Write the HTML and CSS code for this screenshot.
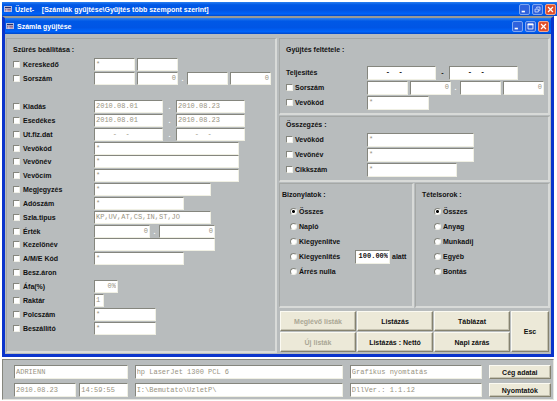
FILE: index.html
```html
<!DOCTYPE html>
<html lang="hu">
<head>
<meta charset="utf-8">
<title>Üzlet</title>
<link rel="stylesheet" href="styles.css">
</head>
<body>
<div class="app">
  <header class="titlebar app-title">
    <svg class="app-icon" viewBox="0 0 10 8"><rect width="10" height="8" fill="#e4e0f0"/><rect x="1" y="1" width="8" height="2" fill="#26306e"/><path d="M1 4.5h2M4 4.5h5M1 6.5h2M4 6.5h5" stroke="#6a3060"/></svg>
    <h1>Üzlet- &nbsp;&nbsp; [Számlák gyűjtése\Gyűjtés több szempont szerint]</h1>
    <div class="window-buttons">
      <button type="button" class="win" aria-label="Kis méret"><svg viewBox="0 0 11 11"><path d="M2 8h4" stroke="#fff" stroke-width="2"/></svg></button>
      <button type="button" class="win" aria-label="Előző méret"><svg viewBox="0 0 11 11"><path d="M4.5 4V2.5h4v4H7M2.5 5h4v3.5h-4z" stroke="#d5e2ff" fill="none"/></svg></button>
      <button type="button" class="win close" aria-label="Bezárás"><svg viewBox="0 0 11 11"><path d="M2.5 2.5l6 6M8.5 2.5l-6 6" stroke="#fff" stroke-width="1.5"/></svg></button>
    </div>
  </header>

  <main class="window">
    <header class="titlebar">
      <svg class="app-icon" viewBox="0 0 10 8"><rect width="10" height="8" fill="#e4e0f0"/><rect x="1" y="1" width="8" height="2" fill="#26306e"/><path d="M1 4.5h2M4 4.5h5M1 6.5h2M4 6.5h5" stroke="#6a3060"/></svg>
      <h2>Számla gyüjtése</h2>
      <div class="window-buttons">
        <button type="button" class="win" aria-label="Kis méret"><svg viewBox="0 0 11 11"><path d="M2 8h4" stroke="#fff" stroke-width="2"/></svg></button>
        <button type="button" class="win" aria-label="Teljes méret"><svg viewBox="0 0 11 11"><path d="M2 3h7" stroke="#fff" stroke-width="2"/><path d="M2.5 2.5h6v6h-6z" stroke="#fff" fill="none"/></svg></button>
        <button type="button" class="win close" aria-label="Bezárás"><svg viewBox="0 0 11 11"><path d="M2.5 2.5l6 6M8.5 2.5l-6 6" stroke="#fff" stroke-width="1.5"/></svg></button>
      </div>
    </header>

    <form class="content">
      <section class="panel filters">
        <h3>Szürés beállítása :</h3>
        <div class="rows">
          <div class="row"><label><input type="checkbox">Kereskedő</label><input class="field w41" aria-label="Kereskedő kód" value="*" disabled><input class="field w41" aria-label="Kereskedő név" disabled></div>
          <div class="row"><label><input type="checkbox">Sorszám</label><input class="field w41" aria-label="Sorszám előtag" disabled><input class="field w41 num" aria-label="Sorszám kezdete" value="0" disabled><span class="sep">.</span><input class="field w41" aria-label="Sorszám záró előtag" disabled><input class="field w41 num" aria-label="Sorszám vége" value="0" disabled></div>
          <div class="row"></div>
          <div class="row"><label><input type="checkbox">Kiadás</label><input class="field w69" aria-label="Kiadás kezdete" value="2010.08.01" disabled><span class="sep wide">.</span><input class="field w69" aria-label="Kiadás vége" value="2010.08.23" disabled></div>
          <div class="row"><label><input type="checkbox">Esedékes</label><input class="field w69" aria-label="Esedékes kezdete" value="2010.08.01" disabled><span class="sep wide">.</span><input class="field w69" aria-label="Esedékes vége" value="2010.08.23" disabled></div>
          <div class="row"><label><input type="checkbox">Ut.fiz.dat</label><input class="field w69" aria-label="Utolsó fizetés kezdete" value="    -  -" disabled><span class="sep wide">.</span><input class="field w69" aria-label="Utolsó fizetés vége" value="    -  -" disabled></div>
          <div class="row"><label><input type="checkbox">Vevökód</label><input class="field w145" aria-label="Vevökód" value="*" disabled></div>
          <div class="row"><label><input type="checkbox">Vevönév</label><input class="field w145" aria-label="Vevönév" value="*" disabled></div>
          <div class="row"><label><input type="checkbox">Vevöcím</label><input class="field w145" aria-label="Vevöcím" value="*" disabled></div>
          <div class="row"><label><input type="checkbox">Megjegyzés</label><input class="field w117" aria-label="Megjegyzés" value="*" disabled></div>
          <div class="row"><label><input type="checkbox">Adószám</label><input class="field w90" aria-label="Adószám" value="*" disabled></div>
          <div class="row"><label><input type="checkbox">Szla.tipus</label><input class="field w117" aria-label="Számla típus" value="KP,UV,AT,CS,IN,ST,JO" disabled></div>
          <div class="row"><label><input type="checkbox">Érték</label><input class="field w56 num" aria-label="Érték kezdete" value="0" disabled><span class="sep">.</span><input class="field w56 num" aria-label="Érték vége" value="0" disabled></div>
          <div class="row"><label><input type="checkbox">Kezelönév</label><input class="field w121" aria-label="Kezelönév" disabled></div>
          <div class="row"><label><input type="checkbox">A/M/E Kód</label><input class="field w90" aria-label="A/M/E Kód" value="*" disabled></div>
          <div class="row"><label><input type="checkbox">Besz.áron</label></div>
          <div class="row"><label><input type="checkbox">Áfa(%)</label><input class="field w24 num" aria-label="Áfa" value="0%" disabled></div>
          <div class="row"><label><input type="checkbox">Raktár</label><input class="field w10" aria-label="Raktár" value="1" disabled></div>
          <div class="row"><label><input type="checkbox">Polcszám</label><input class="field w62" aria-label="Polcszám" value="*" disabled></div>
          <div class="row"><label><input type="checkbox">Beszállító</label><input class="field w62" aria-label="Beszállító" value="*" disabled></div>
        </div>
      </section>

      <div class="side">
        <section class="panel collect">
          <h3>Gyüjtés feltétele :</h3>
          <div class="row"><label for="telj">Teljesítés</label><input class="field w69" id="telj" value="    -  -"><span class="sep wide dark">-</span><input class="field w69" aria-label="Teljesítés vége" value="    -  -"></div>
          <div class="row"><label><input type="checkbox">Sorszám</label><input class="field w41" aria-label="Sorszám előtag" disabled><input class="field w41 num" aria-label="Sorszám kezdete" value="0" disabled><span class="sep">.</span><input class="field w41" aria-label="Sorszám záró előtag" disabled><input class="field w41 num" aria-label="Sorszám vége" value="0" disabled></div>
          <div class="row"><label><input type="checkbox">Vevökód</label><input class="field w62" aria-label="Vevökód" value="*" disabled></div>
        </section>

        <section class="panel totals">
          <h3>Összegzés :</h3>
          <div class="row"><label><input type="checkbox">Vevökód</label><input class="field w107" aria-label="Vevökód" value="*" disabled></div>
          <div class="row"><label><input type="checkbox">Vevönév</label><input class="field w107" aria-label="Vevönév" value="*" disabled></div>
          <div class="row"><label><input type="checkbox">Cikkszám</label><input class="field w90" aria-label="Cikkszám" value="*" disabled></div>
        </section>

        <div class="choices">
          <section class="panel documents">
            <h3>Bizonylatok :</h3>
            <div class="row"><label><input type="radio" name="biz" checked>Összes</label></div>
            <div class="row"><label><input type="radio" name="biz">Napló</label></div>
            <div class="row"><label><input type="radio" name="biz">Kiegyenlítve</label></div>
            <div class="row"><label><input type="radio" name="biz">Kiegyenlítés</label><input class="field w35 num" id="pct" value="100.00%"><label class="suffix" for="pct">alatt</label></div>
            <div class="row"><label><input type="radio" name="biz">Árrés nulla</label></div>
          </section>
          <section class="panel items">
            <h3>Tételsorok :</h3>
            <div class="row"><label><input type="radio" name="tetel" checked>Összes</label></div>
            <div class="row"><label><input type="radio" name="tetel">Anyag</label></div>
            <div class="row"><label><input type="radio" name="tetel">Munkadíj</label></div>
            <div class="row"><label><input type="radio" name="tetel">Egyéb</label></div>
            <div class="row"><label><input type="radio" name="tetel">Bontás</label></div>
          </section>
        </div>

        <div class="actions">
          <button type="button" class="btn" disabled>Meglévő listák</button>
          <button type="button" class="btn">Listázás</button>
          <button type="button" class="btn">Táblázat</button>
          <button type="button" class="btn esc">Esc</button>
          <button type="button" class="btn" disabled>Új listák</button>
          <button type="button" class="btn">Listázás : Nettó</button>
          <button type="button" class="btn">Napi zárás</button>
        </div>
      </div>
    </form>
  </main>

  <footer class="status">
    <input class="field" aria-label="Felhasználó" value="ADRIENN" disabled>
    <input class="field" aria-label="Nyomtató" value="hp LaserJet 1300 PCL 6" disabled>
    <input class="field" aria-label="Nyomtatás módja" value="Grafikus nyomtatás" disabled>
    <button type="button" class="btn">Cég adatai</button>
    <div class="datetime">
      <input class="field" aria-label="Dátum" value="2010.08.23" disabled>
      <input class="field" aria-label="Idő" value="14:59:55" disabled>
    </div>
    <input class="field" aria-label="Mappa" value="I:\Bemutato\UzletP\" disabled>
    <input class="field" aria-label="Verzió" value="DllVer.: 1.1.12" disabled>
    <button type="button" class="btn">Nyomtatók</button>
  </footer>
</div>
</body>
</html>
```

FILE: styles.css
```css
* { box-sizing: border-box; }

body {
  margin: 0;
  background: #fff;
  color: #111;
  font: bold 7px/9px "Liberation Sans", sans-serif;
}

h1, h2, h3 { margin: 0; font: inherit; }

.app {
  display: flex;
  flex-direction: column;
  min-height: 100vh;
  padding: 2px 0 1px 2px;
}

/* Title bars */
.titlebar {
  display: flex;
  align-items: center;
  gap: 3px;
  height: 16px;
  padding: 0 2px 0 1px;
  color: #fff;
  background: linear-gradient(#2a80f0, #0058e6 20%, #0055e5 60%, #0064fa 85%, #0046c8);
}
.app-title {
  height: 14px;
  padding: 0 1px 0 2px;
  flex: none;
}
.titlebar h1, .titlebar h2 { flex: 1; white-space: nowrap; }
.app-icon { width: 8px; height: 6px; }
.window-buttons { display: flex; gap: 2px; }
.win {
  width: 11px;
  height: 11px;
  padding: 0;
  border: 1px solid #7ea6f0;
  border-radius: 2px;
  background: #2f62dd;
}
.win svg { display: block; width: 9px; height: 9px; }
.win.close { background: #e2502b; border-color: #f0a890; }

/* Main window */
.window {
  flex: 1;
  display: flex;
  flex-direction: column;
  margin: 0 3px 0 0;
  border: solid #0a34cc;
  border-width: 0 3px 3px;
  border-top: 2px solid #9a9a94;
  background: #b8bcbd;
}
.window .titlebar { flex: none; }

.content {
  flex: 1;
  display: grid;
  grid-template-columns: 1fr 1fr;
  gap: 2px;
  padding: 4px 1px 1px;
}
.panel {
  border: 1px solid #a5a8a6;
  border-right: 2px solid #d8dad8;
  border-bottom: 2px solid #d8dad8;
}

.row { display: flex; align-items: center; gap: 2px; }
.row label {
  display: flex;
  align-items: center;
  gap: 2px;
  flex: none;
  white-space: nowrap;
}

input[type="checkbox"], input[type="radio"] {
  appearance: none;
  flex: none;
  width: 7px;
  height: 7px;
  margin: 0;
  border: 1px solid;
  border-color: #85867e #f0f0e8 #f0f0e8 #85867e;
  background: #fff;
}
input[type="radio"] { border-radius: 50%; }
input[type="radio"]:checked { background: radial-gradient(circle, #000 1px, #fff 2px); }

.field {
  min-width: 0;
  height: 14px;
  padding: 0 1px 1px;
  border: 1px solid;
  border-color: #85867e #f0f0e4 #f0f0e4 #85867e;
  border-radius: 0;
  background: #fff;
  color: #111;
  font: bold 7px/9px "Liberation Mono", monospace;
}
.field:disabled { color: #98937f; font-weight: normal; }
.num { text-align: right; }
.w10 { width: 10px; }
.w24 { width: 24px; }
.w35 { width: 35px; }
.w41 { width: 41px; }
.w56 { width: 56px; }
.w62 { width: 62px; }
.w69 { width: 69px; }
.w90 { width: 90px; }
.w107 { width: 107px; }
.w117 { width: 117px; }
.w121 { width: 121px; }
.w145 { width: 145px; }

.sep { width: 5px; text-align: center; color: #fff; }
.sep.wide { width: 9px; }
.sep.dark { color: #111; }

/* Filter list */
.filters {
  display: flex;
  flex-direction: column;
  padding: 6px 0 16px 6px;
}
.filters h3 { margin-bottom: 4px; }
.rows { flex: 1; display: grid; grid-auto-rows: 1fr; }
.rows .field { height: 13px; }
.filters .row label { width: 79px; gap: 3px; }

/* Right side */
.side { display: flex; flex-direction: column; gap: 1px; }
.collect, .totals { padding: 5px 0 3px 6px; }
.collect .row, .totals .row { height: 15px; }
.collect .row label, .totals .row label { width: 79px; }
.collect h3 { margin: 1px 0 11px; }
.totals { padding-top: 3px; }
.totals h3 { margin-bottom: 3px; }

.choices { flex: 1; display: grid; grid-template-columns: 1fr 1fr; gap: 1px; }
.choices .panel { padding: 6px 0 0 2px; }
.choices h3 { margin-bottom: 5px; }
.choices .row { height: 15px; padding-left: 8px; }
.documents .row label:first-child { width: 63px; }
.documents .row .suffix { width: auto; }
.choices .items { padding-left: 6px; }
.items .row { padding-left: 12px; }

/* Buttons */
.btn {
  padding: 0;
  border: 1px solid;
  border-color: #fbfaf2 #85826f #85826f #fbfaf2;
  border-radius: 0;
  background: #ece9d8;
  box-shadow: inset -1px -1px #c5c2b0;
  color: #111;
  font: inherit;
  white-space: nowrap;
}
.btn:disabled { color: #aaa795; }
.actions {
  display: grid;
  grid-template-columns: 2fr 2fr 2fr 1fr;
  grid-template-rows: 20px 20px;
  gap: 1px;
  padding: 2px 1px 1px;
}
.esc { grid-row: span 2; grid-column: 4; }

/* Status area */
.status {
  display: grid;
  grid-template-columns: 113fr 207fr 131fr 62fr;
  gap: 4px 7px;
  margin: 2px 3px 0 0;
  padding: 5px 2px 2px 11px;
  border: 1px solid #85867e;
  border-right-color: #e6e6e0;
  border-bottom-color: #e6e6e0;
  background: #b8bcbd;
}
.status .field { width: 100%; }
.datetime { display: grid; grid-template-columns: 62fr 48fr; gap: 3px; }
```
